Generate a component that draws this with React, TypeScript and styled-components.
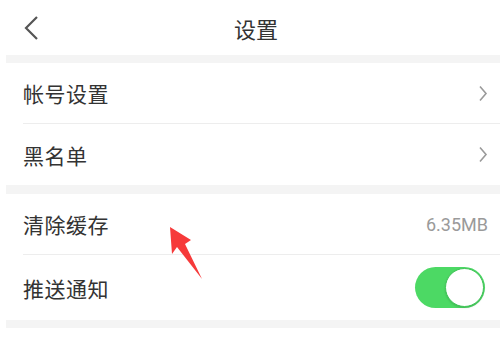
import React, { useState } from 'react';
import styled, { createGlobalStyle } from 'styled-components';

const GlobalStyle = createGlobalStyle`
  html, body {
    margin: 0;
    padding: 0;
    background: #ffffff;
  }
  body {
    font-family: "Noto Sans CJK SC", "Noto Sans", sans-serif;
  }
`;

const Page = styled.div`
  position: relative;
  width: 500px;
  height: 338px;
  overflow: hidden;
  background: #ffffff;
  padding-left: 6px;
  box-sizing: border-box;
`;

const Header = styled.div`
  height: 55px;
  display: grid;
  grid-template-columns: 60px 1fr 60px;
  align-items: center;
`;

const BackButton = styled.button`
  border: none;
  background: none;
  padding: 0 0 0 18px;
  height: 55px;
  display: flex;
  align-items: center;
  cursor: pointer;
`;

const Title = styled.h1`
  margin: 0;
  text-align: center;
  font-size: 22px;
  font-weight: 400;
  color: #333333;
  padding-left: 6px;
`;

const Gap = styled.div<{ $h?: number }>`
  height: ${(p) => p.$h ?? 8}px;
  background: #f4f4f4;
`;

const Group = styled.div`
  padding-left: 17px;
  background: #ffffff;
`;

const Row = styled.div<{ $h: number; $last?: boolean }>`
  height: ${(p) => p.$h}px;
  display: flex;
  align-items: center;
  justify-content: space-between;
  padding-right: 12px;
  border-bottom: ${(p) => (p.$last ? 'none' : '1px solid #ededed')};
  box-sizing: border-box;
`;

const Label = styled.span`
  font-size: 21px;
  color: #333333;
  letter-spacing: 0.5px;
`;

const Value = styled.span`
  font-family: "Roboto", "Noto Sans", sans-serif;
  font-size: 18px;
  color: #9a9a9a;
`;

const Switch = styled.button<{ $on: boolean }>`
  position: relative;
  width: 70px;
  height: 41px;
  border-radius: 21px;
  border: none;
  padding: 0;
  margin-right: 3px;
  background: ${(p) => (p.$on ? '#4cd964' : '#e5e5e5')};
  cursor: pointer;
`;

const Knob = styled.span<{ $on: boolean }>`
  position: absolute;
  top: 1px;
  left: ${(p) => (p.$on ? '30px' : '1px')};
  width: 37px;
  height: 37px;
  border-radius: 50%;
  background: #ffffff;
  border: 1px solid #3fc457;
  box-shadow: 0 1px 2px rgba(0, 0, 0, 0.15);
`;

const Arrow = styled.svg`
  position: absolute;
  left: 0;
  top: 0;
  pointer-events: none;
`;

const Chevron = () => (
  <svg width="10" height="17" viewBox="0 0 10 17">
    <path d="M2 1.5 L8 8.5 L2 15.5" fill="none" stroke="#9a9a9a" strokeWidth="1.6" />
  </svg>
);

export default function App() {
  const [push, setPush] = useState(true);
  return (
    <>
      <GlobalStyle />
      <Page>
        <Header>
          <BackButton aria-label="返回">
            <svg width="16" height="26" viewBox="0 0 16 26">
              <path d="M13 2 L2 13 L13 24" fill="none" stroke="#555555" strokeWidth="2.2" />
            </svg>
          </BackButton>
          <Title>设置</Title>
          <div />
        </Header>
        <Gap />
        <Group>
          <Row $h={61}>
            <Label>帐号设置</Label>
            <Chevron />
          </Row>
          <Row $h={61} $last>
            <Label>黑名单</Label>
            <Chevron />
          </Row>
        </Group>
        <Gap $h={9} />
        <Group>
          <Row $h={61}>
            <Label>清除缓存</Label>
            <Value>6.35MB</Value>
          </Row>
          <Row $h={65} $last>
            <Label>推送通知</Label>
            <Switch $on={push} onClick={() => setPush(!push)} aria-label="推送通知">
              <Knob $on={push} />
            </Switch>
          </Row>
        </Group>
        <Gap />
        <Arrow width="500" height="338" viewBox="0 0 500 338">
          <polygon points="170,227 191,240 185,244 202,279 177,247 172,254" fill="#f63a3a" />
        </Arrow>
      </Page>
    </>
  );
}
